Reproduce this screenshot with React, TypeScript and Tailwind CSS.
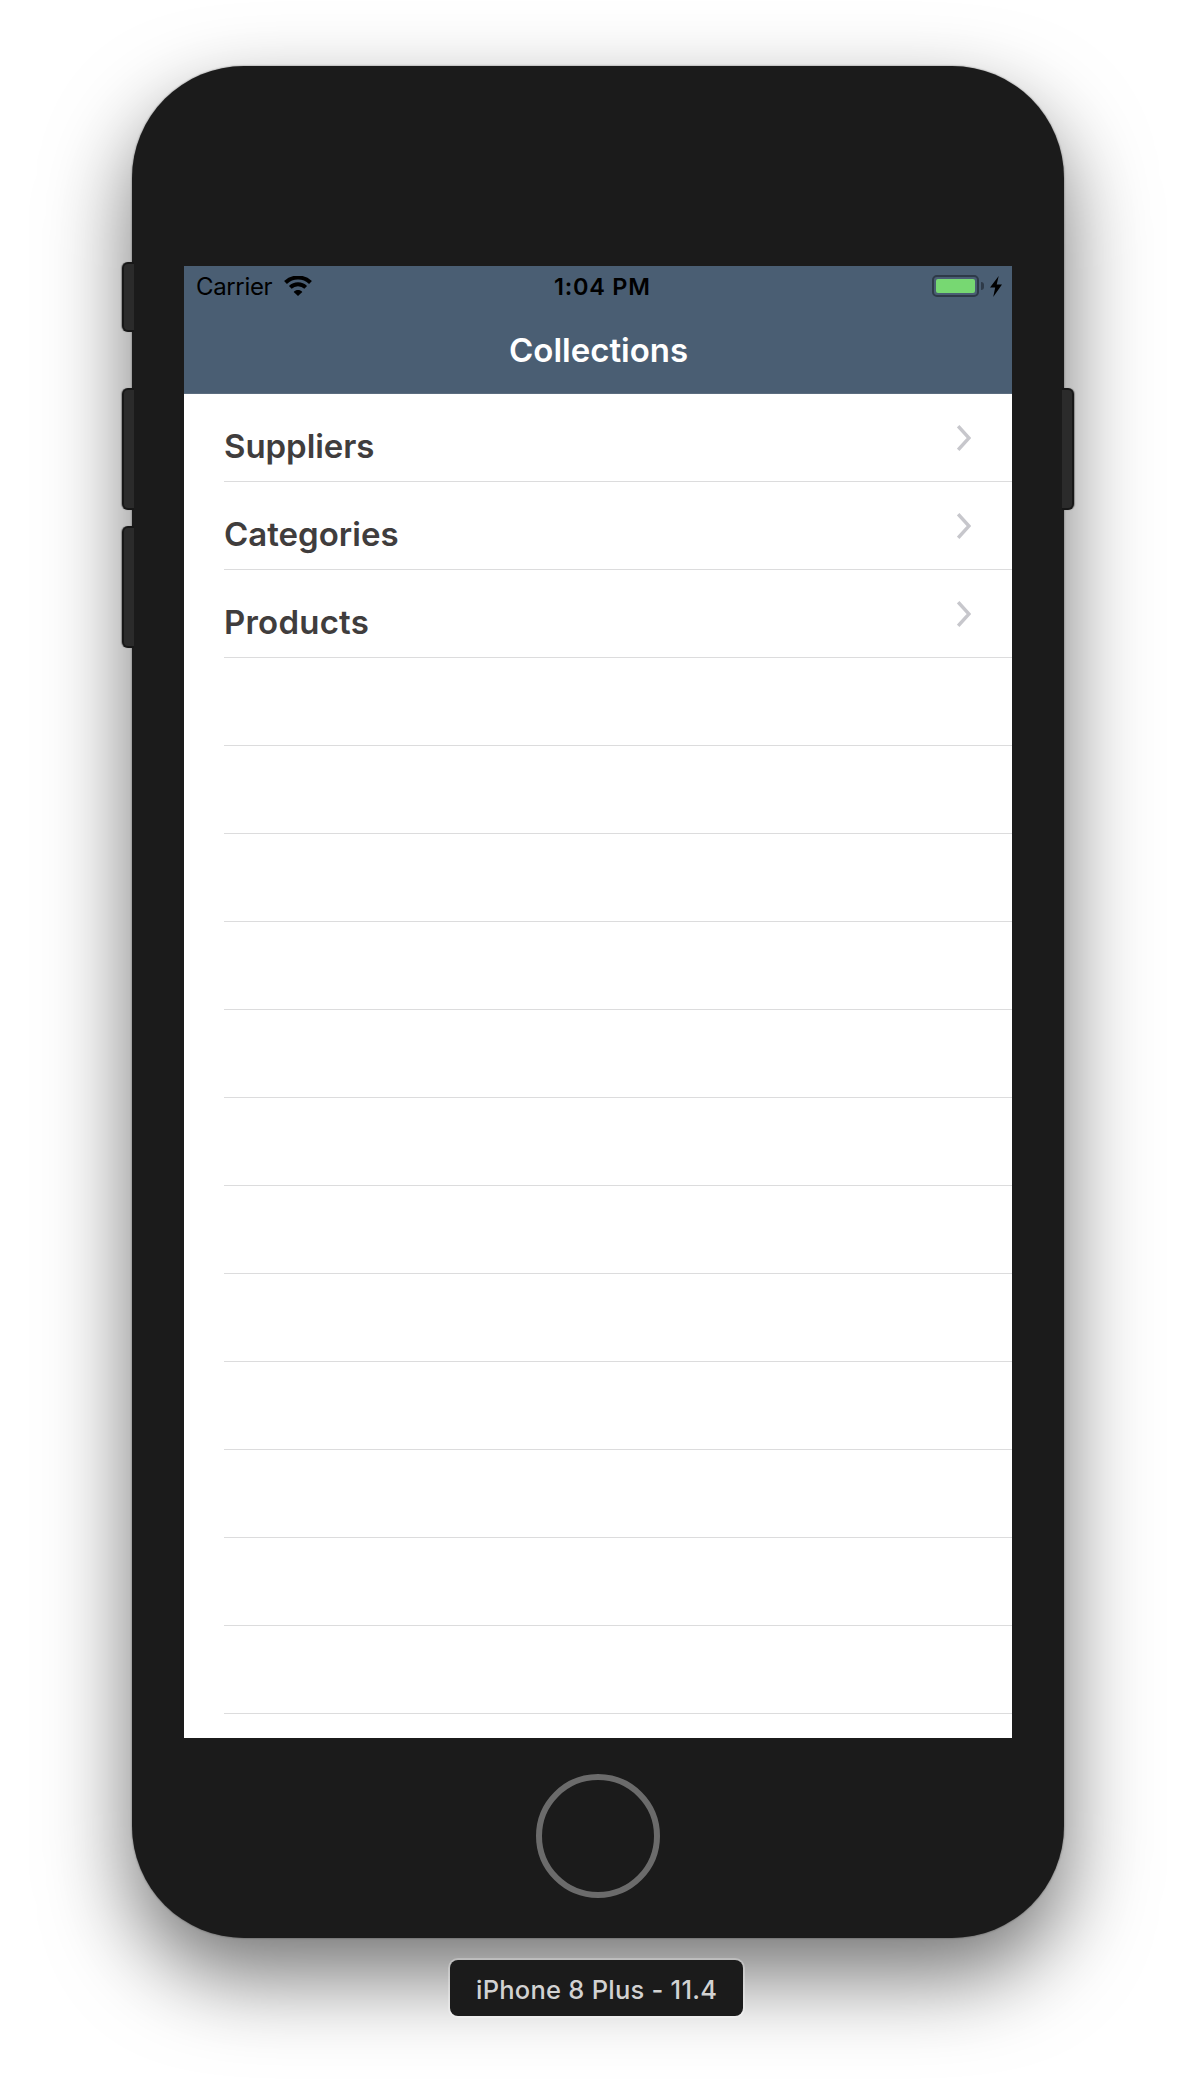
import React from "react";

const items = ["Suppliers", "Categories", "Products"];
const tracking = ["tracking-[-0.05px]", "tracking-[0px]", "tracking-[0.22px]"];

function WifiIcon() {
  return (
    <svg className="ml-[12px] mt-[10px] h-[20px] w-[28px]" viewBox="0 0 28 20" fill="none" stroke="#000">
      <path d="M1.5 6.6A18 18 0 0 1 26.5 6.6" strokeWidth="4.1" />
      <path d="M6.3 11.4A11.1 11.1 0 0 1 21.7 11.4" strokeWidth="3.9" />
      <path d="M9.7 16C12 13.4 16 13.4 18.3 16L14 20Z" fill="#000" stroke="none" />
    </svg>
  );
}

function Battery() {
  return (
    <div className="mt-[9px] flex items-center self-start">
      <div className="h-[22px] w-[47px] rounded-[5px] border-2 border-[#2e3a48] p-[2px]">
        <div className="h-full w-full rounded-[2px] bg-[#77d872]" />
      </div>
      <div className="ml-[2px] h-[8px] w-[3px] rounded-r-[3px] bg-[#2e3a48]" />
      <svg className="ml-[6px] h-[21px] w-[12px]" viewBox="0 0 12 21">
        <path d="M8.7 0 0 11.6H5.2L3.2 21 12 8.5H6.7Z" fill="#000" />
      </svg>
    </div>
  );
}

function Chevron() {
  return (
    <svg className="mr-[41px] mt-[31px] h-[26px] w-[14px] shrink-0" viewBox="0 0 14 26" fill="none">
      <path d="M1.2 1.2 12 13 1.2 24.8" stroke="#c7c7cc" strokeWidth="3.4" />
    </svg>
  );
}

export default function App() {
  return (
    <div className="flex h-[2100px] w-[1196px] flex-col items-center overflow-hidden bg-white pt-[66px] font-['Inter',sans-serif]">
      <div className="relative h-[1872px] w-[932px] shrink-0 rounded-[112px] bg-[#1b1b1b] px-[52px] pt-[200px] shadow-[0_0_2px_rgba(0,0,0,0.5),0_38px_86px_rgba(0,0,0,0.55)]">
        {/* hardware buttons on the phone's edges */}
        <div className="absolute left-[-10px] top-[196px] h-[70px] w-[12px] rounded-l-[6px] border-2 border-r-0 border-[#171717] bg-[#2b2b2b] shadow-[-1px_0_1px_rgba(0,0,0,0.3)]" />
        <div className="absolute left-[-10px] top-[322px] h-[122px] w-[12px] rounded-l-[6px] border-2 border-r-0 border-[#171717] bg-[#2b2b2b] shadow-[-1px_0_1px_rgba(0,0,0,0.3)]" />
        <div className="absolute left-[-10px] top-[460px] h-[122px] w-[12px] rounded-l-[6px] border-2 border-r-0 border-[#171717] bg-[#2b2b2b] shadow-[-1px_0_1px_rgba(0,0,0,0.3)]" />
        <div className="absolute right-[-10px] top-[322px] h-[122px] w-[12px] rounded-r-[6px] border-2 border-l-0 border-[#171717] bg-[#2b2b2b] shadow-[1px_0_1px_rgba(0,0,0,0.3)]" />

        <div className="flex h-[1472px] w-[828px] flex-col overflow-hidden bg-white">
          <header className="h-[128px] shrink-0 border-b border-[#5b6c7f] bg-[#4a5e73]">
            <div className="grid h-[40px] grid-cols-3 text-black">
              <div className="flex pl-[12px]">
                <span className="text-[24px] leading-[41px] tracking-[-0.35px]">Carrier</span>
                <WifiIcon />
              </div>
              <div className="pl-[94px] text-[23.5px] font-[560] leading-[41px] tracking-[0.75px]">1:04 PM</div>
              <div className="flex justify-end pr-[10px]">
                <Battery />
              </div>
            </div>
            <h1 className="h-[88px] pl-[325px] text-[33px] font-[570] leading-[88px] tracking-[0px] text-white">
              Collections
            </h1>
          </header>
          <ul className="pl-[40px]">
            {Array.from({ length: 16 }, (_, i) => (
              <li key={i} className="flex h-[88px] items-start justify-between border-b border-[#dcdcdd]">
                {items[i] && (
                  <>
                    <span className={`mt-[32px] text-[33px] font-semibold leading-[40px] text-[#403d3d] ${tracking[i]}`}>
                      {items[i]}
                    </span>
                    <Chevron />
                  </>
                )}
              </li>
            ))}
          </ul>
        </div>

        <div className="mx-auto mt-[36px] h-[124px] w-[124px] rounded-full border-[6px] border-[#6b6b6b]" />
      </div>

      <div className="relative mr-[3px] mt-[22px] h-[56px] w-[293px] shrink-0 rounded-[8px] bg-[#1b1b1b] pl-[26px] text-[25.5px] font-medium leading-[60px] tracking-[0.24px] text-[#d2d2d2] shadow-[0_0_0_2px_rgba(255,255,255,0.28)] whitespace-nowrap">
        iPhone 8 Plus - 11.4
      </div>
    </div>
  );
}
